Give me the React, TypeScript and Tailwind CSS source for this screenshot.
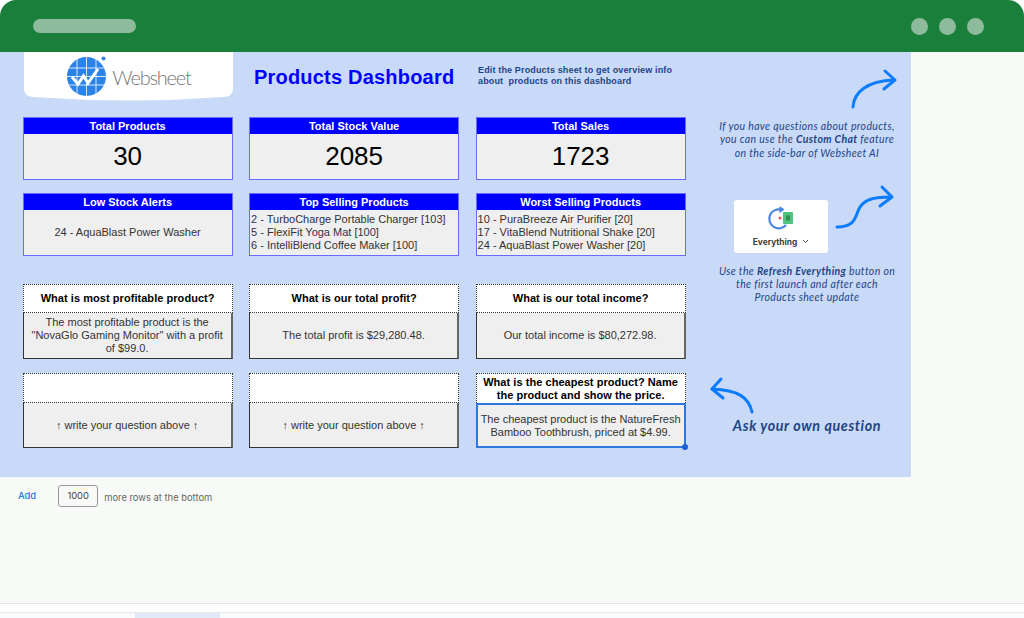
function StatCard({ title, children }: { title: string; children: React.ReactNode }) {
  return (
    <div className="h-[63px] flex flex-col border border-[#6a6aff] bg-[#efefef]">
      <div className="h-[16px] shrink-0 bg-[#0000ff] text-white text-[11px] leading-[16px] font-bold text-center">{title}</div>
      <div className="flex-1 flex flex-col justify-center">{children}</div>
    </div>
  );
}

function Question({ question, answer, selected, tall }: { question?: string; answer: string; selected?: boolean; tall?: boolean }) {
  return (
    <div className="h-[75px] flex flex-col">
      <div className={`${tall ? 'h-[30px]' : 'h-[29px]'} shrink-0 flex items-center justify-center bg-white border border-dotted border-[#333] text-[11px] leading-[13px] font-bold tracking-[0.05px] text-black text-center ${selected ? 'border-b-0' : ''}`}>
        {question}
      </div>
      {selected ? (
        <div className="relative flex-1 flex items-center justify-center bg-[#efefef] border-2 border-[#2f76dd] text-[11px] leading-[13px] text-[#333] text-center">
          {answer}
          <span className="absolute -right-[4px] -bottom-[4px] w-[6px] h-[6px] rounded-full bg-[#1a5fd0]"></span>
        </div>
      ) : (
        <div className="flex-1 flex items-center justify-center bg-[#efefef] border border-t-0 border-[#333] border-r-[#666] border-r-2 text-[11px] leading-[13px] text-[#333] text-center px-1">
          {answer}
        </div>
      )}
    </div>
  );
}

function WebsheetLogo() {
  return (
    <svg width="40" height="40" viewBox="0 0 40 40" className="shrink-0">
      <circle cx="19.5" cy="20.5" r="19.5" fill="#2b83e8" />
      <path d="M0 12H39M0 20.5H39M0 29H39M10 2V39M19.5 1V40M29 2V39" stroke="#fff" strokeWidth="0.8" />
      <path d="M5 21L11 28L16.5 20L21 27L31 13" fill="none" stroke="#fff" strokeWidth="3" />
      <circle cx="36.5" cy="2.5" r="2" fill="#2b83e8" />
    </svg>
  );
}

export default function App() {
  return (
    <div className="w-[1024px] h-[618px] overflow-hidden flex flex-col bg-white font-['Liberation_Sans',Arial,sans-serif]">
      {/* Window bar */}
      <div className="h-[52px] shrink-0 bg-[#1b7f3c] rounded-t-2xl flex items-center justify-between pl-[33px] pr-[40px]">
        <div className="w-[103px] h-[14px] rounded-[7px] bg-[#8dbb9b]"></div>
        <div className="flex gap-[11px]">
          <span className="w-[17px] h-[17px] rounded-full bg-[#8dbb9b]"></span>
          <span className="w-[17px] h-[17px] rounded-full bg-[#8dbb9b]"></span>
          <span className="w-[17px] h-[17px] rounded-full bg-[#8dbb9b]"></span>
        </div>
      </div>

      <div className="flex-1 flex flex-col bg-[#f8faf7]">
        {/* Sheet */}
        <div className="w-[911px] h-[425px] shrink-0 bg-[#c9daf8] flex">
          <div className="w-[686px] shrink-0 pl-[23px]">
            <div className="h-[65px] flex items-start">
              <div className="relative w-[209px] h-[50px] ml-px flex items-center justify-center gap-[5px] pb-[3px] pl-[1px] font-['Lato',sans-serif]">
                <svg width="209" height="50" viewBox="0 0 209 50" className="absolute inset-0">
                  <path d="M0 0H209V37Q209 44 200 45Q105 52 9 45Q0 44 0 37Z" fill="#fff" />
                </svg>
                <span className="relative"><WebsheetLogo /></span>
                <span className="relative text-[20px] text-[#777] font-light tracking-[-1.2px] mt-[3px]">Websheet</span>
              </div>
              <h1 className="w-[226px] mt-[12px] ml-[21px] text-[20px] leading-[26px] font-bold text-[#0000ff] tracking-[0.2px] whitespace-nowrap">Products Dashboard</h1>
              <p className="mt-[13px] -ml-[2px] text-[9px] leading-[11px] font-bold text-[#1c4587] tracking-[0.15px] whitespace-pre">Edit the Products sheet to get overview info{'\n'}about  products on this dashboard</p>
            </div>

            <div className="grid grid-cols-[210px_210px_210px] gap-x-[16.5px] gap-y-[13px] -ml-[0.4px]">
              <StatCard title="Total Products"><div className="text-[26px] leading-[30px] -mt-[2px] text-black text-center">30</div></StatCard>
              <StatCard title="Total Stock Value"><div className="text-[26px] leading-[30px] -mt-[2px] text-black text-center">2085</div></StatCard>
              <StatCard title="Total Sales"><div className="text-[26px] leading-[30px] -mt-[2px] text-black text-center">1723</div></StatCard>
              <StatCard title="Low Stock Alerts"><div className="text-[11px] text-[#333] text-center">24 - AquaBlast Power Washer</div></StatCard>
              <StatCard title="Top Selling Products">
                <div className="text-[11px] leading-[13px] text-[#333] pl-px">
                  <div>2 - TurboCharge Portable Charger [103]</div>
                  <div>5 - FlexiFit Yoga Mat [100]</div>
                  <div>6 - IntelliBlend Coffee Maker [100]</div>
                </div>
              </StatCard>
              <StatCard title="Worst Selling Products">
                <div className="text-[11px] leading-[13px] text-[#333] pl-px">
                  <div>10 - PuraBreeze Air Purifier [20]</div>
                  <div>17 - VitaBlend Nutritional Shake [20]</div>
                  <div>24 - AquaBlast Power Washer [20]</div>
                </div>
              </StatCard>
            </div>

            <div className="grid grid-cols-[210px_210px_210px] gap-x-[16.5px] gap-y-[14px] mt-[28px] -ml-[0.4px]">
              <Question question="What is most profitable product?" answer={'The most profitable product is the "NovaGlo Gaming Monitor" with a profit of $99.0.'} />
              <Question question="What is our total profit?" answer="The total profit is $29,280.48." />
              <Question question="What is our total income?" answer="Our total income is $80,272.98." />
              <Question tall answer="↑ write your question above ↑" />
              <Question tall answer="↑ write your question above ↑" />
              <Question tall selected question="What is the cheapest product? Name the product and show the price." answer="The cheapest product is the NatureFresh Bamboo Toothbrush, priced at $4.99." />
            </div>
          </div>

          {/* Tips column */}
          <div className="flex-1 flex flex-col items-center pt-[18px] pl-[17px] font-['Lato',sans-serif] italic text-[#1c4587] text-[10.5px] leading-[13.3px] tracking-[0.35px] text-center">
            <svg width="46" height="40" viewBox="0 0 46 40" className="self-end mr-[15px] overflow-visible text-[#0b7cff]" fill="none" stroke="currentColor" strokeWidth="3" strokeLinecap="round" strokeLinejoin="round">
              <path d="M3 37C4 22 17 11 44 10" />
              <path d="M35 1L45 10L34 19" />
            </svg>
            <p className="mt-[10px] whitespace-nowrap">
              If you have questions about products,<br />
              you can use the <b>Custom Chat</b> feature<br />
              on the side-bar of Websheet AI
            </p>
            <div className="relative mt-[40px] mr-[52px] w-[94px] h-[53px] bg-white rounded-[3px] not-italic flex flex-col items-center">
              <svg width="28" height="28" viewBox="0 0 28 28" className="mt-[6px]" fill="none">
                <path d="M14 3.6A9.5 9.5 0 1 0 19 19" stroke="#4a84e2" strokeWidth="2.2" />
                <path d="M12.5 0L17.5 3.6L12.5 7.2Z" fill="#4a84e2" />
                <circle cx="13" cy="12" r="1.6" fill="#ea5a4e" />
                <rect x="16" y="6" width="10" height="12" rx="1" fill="#4fc37b" />
                <rect x="19" y="9.5" width="4" height="5" fill="#2f8f55" />
              </svg>
              <div className="mt-[3px] flex items-center gap-[5px] text-[8.3px] leading-[10px] font-['Inter',sans-serif] font-bold text-[#3c3c3c] tracking-normal">
                Everything
                <svg width="7" height="5" viewBox="0 0 7 5" fill="none" stroke="#444" strokeWidth="1"><path d="M1 1L3.5 3.5L6 1" /></svg>
              </div>
              <svg width="58" height="44" viewBox="0 0 58 44" className="absolute left-[101px] -top-[15px] overflow-visible text-[#0b7cff]" fill="none" stroke="currentColor" strokeWidth="3" strokeLinecap="round" strokeLinejoin="round">
                <path d="M2 42C22 42 20 30 25 22C30 14 40 12 56 12" />
                <path d="M47 2L57 12L45 21" />
              </svg>
            </div>
            <p className="mt-[12px] whitespace-nowrap">
              Use the <b>Refresh Everything</b> button on<br />
              the first launch and after each<br />
              Products sheet update
            </p>
            <svg width="44" height="38" viewBox="0 0 44 38" className="self-start ml-[6px] mt-[73px] overflow-visible text-[#0b7cff]" fill="none" stroke="currentColor" strokeWidth="3" strokeLinecap="round" strokeLinejoin="round">
              <path d="M43 34C40 20 30 12 3 11" />
              <path d="M12 1L3 11L14 20" />
            </svg>
            <p className="mt-[1px] text-[14.3px] leading-[18px] font-bold tracking-[0.6px] whitespace-nowrap">Ask your own question</p>
          </div>
        </div>

        {/* Add rows */}
        <div className="h-[127px] shrink-0 flex items-start pl-[18px] pt-[8px] font-['Inter',sans-serif] text-[9.4px] border-b border-[#e3e3e3]">
          <span className="mt-[4px] font-medium text-[#1a73e8]">Add</span>
          <div className="ml-[22px] w-[40px] h-[22px] border border-[#999] rounded-[3px] flex items-center justify-center text-[#444]">1000</div>
          <span className="ml-[6px] mt-[6px] text-[#666]">more rows at the bottom</span>
        </div>
        <div className="h-[9px] shrink-0 bg-white border-b border-[#e8e8e8]"></div>
        <div className="flex-1 bg-[#f8fafd] pl-[135px]">
          <div className="w-[85px] h-full bg-[#e1e9f7]"></div>
        </div>
      </div>
    </div>
  );
}
